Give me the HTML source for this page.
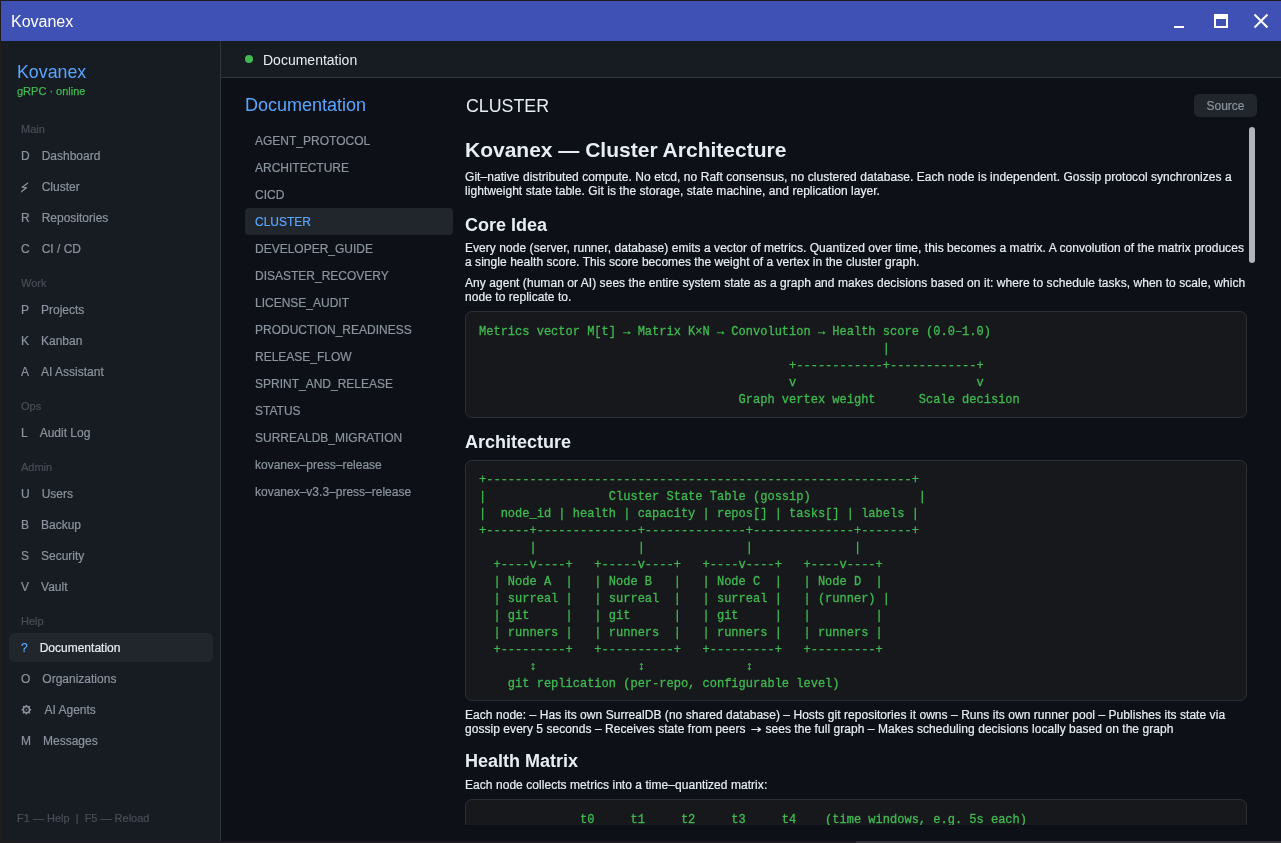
<!DOCTYPE html>
<html><head><meta charset="utf-8">
<style>
*{margin:0;padding:0;box-sizing:border-box}
html,body{width:1281px;height:843px;overflow:hidden;background:#1e1d1b;font-family:"Liberation Sans",sans-serif}
.a{position:absolute;white-space:pre}
#tb{will-change:transform;position:absolute;left:1px;top:1px;width:1280px;height:40px;background:#3f51b5}
#sb{will-change:transform;position:absolute;left:1px;top:41px;width:220px;height:800px;background:#171b22;border-right:1px solid #30363d}
#hd{will-change:transform;position:absolute;left:221px;top:41px;width:1060px;height:37px;background:#171b22;border-bottom:1px solid #30363d}
#mn{will-change:transform;position:absolute;left:221px;top:78px;width:1060px;height:763px;background:#0d1117;overflow:hidden}
.nav{position:absolute;left:8px;width:204px;height:29px;line-height:29px;font-size:12px;color:#8b949e;padding-left:12px;padding-top:1px;display:flex;border-radius:5px}
.nav i{font-style:normal;margin-right:12px}
.nav,.dl,.sec{-webkit-text-stroke:0.2px currentColor}
.nav.act{background:#21262d;color:#e6edf3}
.nav.act i{color:#58a6ff}
.sec{position:absolute;left:20px;font-size:11px;line-height:14px;color:#484f58}
.dl{position:absolute;left:24px;width:208px;height:27px;line-height:27px;font-size:12px;color:#8b949e;padding-left:10px;padding-top:1px;border-radius:4px}
.dl.act{background:#21262d;color:#58a6ff}
.p{position:absolute;left:244px;font-size:12px;line-height:14px;color:#e6edf3;white-space:pre;-webkit-text-stroke:0.2px #e6edf3;letter-spacing:0.05px}
.h{position:absolute;left:244px;font-weight:bold;color:#e6edf3;white-space:pre}
.code{position:absolute;left:244px;width:782px;background:#16181c;border:1px solid #2b3038;border-radius:7px}
.code pre{position:absolute;left:13px;top:12px;font-family:"Liberation Mono",monospace;font-size:12.03px;line-height:17px;color:#3fb950;-webkit-text-stroke:0.3px #3fb950}
</style></head><body>
<div style="position:absolute;left:856px;top:841px;width:425px;height:2px;background:#333331"></div>
<div id="tb">
  <div class="a" style="left:10px;top:7px;font-size:16px;line-height:28px;color:#fff">Kovanex</div>
  <div style="position:absolute;left:1173px;top:24.5px;width:10px;height:2.6px;background:#fff"></div>
  <div style="position:absolute;left:1213px;top:13px;width:14px;height:14px;border:2px solid #fff;border-top-width:5px"></div>
  <svg style="position:absolute;left:1252px;top:12px" width="16" height="16" viewBox="0 0 16 16"><path d="M1.5 1.5L14.5 14.5M14.5 1.5L1.5 14.5" stroke="#fff" stroke-width="2"/></svg>
</div>

<div id="sb">
  <div class="a" style="left:16px;top:20px;font-size:17.8px;line-height:22px;color:#58a6ff">Kovanex</div>
  <div class="a" style="left:16px;top:43px;font-size:11px;line-height:14px;color:#3fb950;-webkit-text-stroke:0.25px #3fb950">gRPC · online</div>

  <div class="sec" style="top:81px">Main</div>
  <div class="nav" style="top:100px"><i>D</i>Dashboard</div>
  <div class="nav" style="top:131px"><i style="width:8.67px;display:inline-block"></i>Cluster<svg style="position:absolute;left:12px;top:10px" width="9" height="12" viewBox="0 0 9 12"><path d="M6.6 1.2L1.1 5.2L5.5 5.8L0.3 9.8" fill="none" stroke="#8b949e" stroke-width="1.25" stroke-linecap="round" stroke-linejoin="round"/></svg></div>
  <div class="nav" style="top:162px"><i>R</i>Repositories</div>
  <div class="nav" style="top:193px"><i>C</i>CI / CD</div>

  <div class="sec" style="top:235px">Work</div>
  <div class="nav" style="top:254px"><i>P</i>Projects</div>
  <div class="nav" style="top:285px"><i>K</i>Kanban</div>
  <div class="nav" style="top:316px"><i>A</i>AI Assistant</div>

  <div class="sec" style="top:358px">Ops</div>
  <div class="nav" style="top:377px"><i>L</i>Audit Log</div>

  <div class="sec" style="top:419px">Admin</div>
  <div class="nav" style="top:438px"><i>U</i>Users</div>
  <div class="nav" style="top:469px"><i>B</i>Backup</div>
  <div class="nav" style="top:500px"><i>S</i>Security</div>
  <div class="nav" style="top:531px"><i>V</i>Vault</div>

  <div class="sec" style="top:573px">Help</div>
  <div class="nav act" style="top:592px"><i>?</i>Documentation</div>
  <div class="nav" style="top:623px"><i>O</i>Organizations</div>
  <div class="nav" style="top:654px"><i style="width:11.5px;display:inline-block"></i>AI Agents<svg style="position:absolute;left:12px;top:9px" width="11" height="11" viewBox="0 0 11 11"><g transform="translate(5.4 5.7)"><circle r="3.1" fill="none" stroke="#8b949e" stroke-width="1.5"/><circle r="0.8" fill="#8b949e"/><g stroke="#8b949e" stroke-width="1.5"><path d="M0 -4.8V-3.4M0 3.4V4.8M-4.8 0H-3.4M3.4 0H4.8M-3.4 -3.4L-2.4 -2.4M2.4 2.4L3.4 3.4M3.4 -3.4L2.4 -2.4M-2.4 2.4L-3.4 3.4"/></g></g></svg></div>
  <div class="nav" style="top:685px"><i>M</i>Messages</div>

  <div class="a" style="left:16px;top:770px;font-size:11px;line-height:14px;color:#484f58;-webkit-text-stroke:0.2px #484f58">F1 — Help  |  F5 — Reload</div>
</div>

<div id="hd">
  <div style="position:absolute;left:24px;top:14px;width:8px;height:8px;border-radius:50%;background:#3fb950"></div>
  <div class="a" style="left:42px;top:10px;font-size:14px;line-height:18px;color:#e6edf3">Documentation</div>
</div>

<div id="mn">
  <div class="a" style="left:24px;top:16px;font-size:18px;line-height:22px;color:#58a6ff">Documentation</div>
  <div class="dl" style="top:49px">AGENT_PROTOCOL</div>
  <div class="dl" style="top:76px">ARCHITECTURE</div>
  <div class="dl" style="top:103px">CICD</div>
  <div class="dl act" style="top:130px">CLUSTER</div>
  <div class="dl" style="top:157px">DEVELOPER_GUIDE</div>
  <div class="dl" style="top:184px">DISASTER_RECOVERY</div>
  <div class="dl" style="top:211px">LICENSE_AUDIT</div>
  <div class="dl" style="top:238px">PRODUCTION_READINESS</div>
  <div class="dl" style="top:265px">RELEASE_FLOW</div>
  <div class="dl" style="top:292px">SPRINT_AND_RELEASE</div>
  <div class="dl" style="top:319px">STATUS</div>
  <div class="dl" style="top:346px">SURREALDB_MIGRATION</div>
  <div class="dl" style="top:373px">kovanex–press–release</div>
  <div class="dl" style="top:400px">kovanex–v3.3–press–release</div>

  <div class="a" style="left:245px;top:17px;font-size:17.8px;line-height:22px;color:#e6edf3">CLUSTER</div>
  <div style="position:absolute;left:973px;top:16px;width:63px;height:23px;border-radius:5px;background:#21262d;color:#8b949e;font-size:12px;line-height:23px;padding-top:1px;text-align:center;-webkit-text-stroke:0.2px #8b949e">Source</div>
  <div style="position:absolute;left:1028px;top:49px;width:6px;height:136px;border-radius:3px;background:#b1b5b9"></div>

  <div class="h" style="top:59px;font-size:21px;line-height:26px">Kovanex — Cluster Architecture</div>
  <div class="p" style="top:92px">Git–native distributed compute. No etcd, no Raft consensus, no clustered database. Each node is independent. Gossip protocol synchronizes a
lightweight state table. Git is the storage, state machine, and replication layer.</div>
  <div class="h" style="top:136px;font-size:18px;line-height:22px">Core Idea</div>
  <div class="p" style="top:163px">Every node (server, runner, database) emits a vector of metrics. Quantized over time, this becomes a matrix. A convolution of the matrix produces
a single health score. This score becomes the weight of a vertex in the cluster graph.</div>
  <div class="p" style="top:198px">Any agent (human or AI) sees the entire system state as a graph and makes decisions based on it: where to schedule tasks, when to scale, which
node to replicate to.</div>
  <div class="code" style="top:233px;height:107px"><pre>Metrics vector M[t] → Matrix K×N → Convolution → Health score (0.0–1.0)
                                                        |
                                           +------------+------------+
                                           v                         v
                                    Graph vertex weight      Scale decision</pre></div>
  <div class="h" style="top:353px;font-size:18px;line-height:22px">Architecture</div>
  <div class="code" style="top:382px;height:241px"><pre style="top:11px">+-----------------------------------------------------------+
|                 Cluster State Table (gossip)               |
|  node_id | health | capacity | repos[] | tasks[] | labels |
+------+--------------+--------------+--------------+-------+
       |              |              |              |
  +----v----+   +-----v----+   +----v----+   +----v----+
  | Node A  |   | Node B   |   | Node C  |   | Node D  |
  | surreal |   | surreal  |   | surreal |   | (runner) |
  | git     |   | git      |   | git     |   |         |
  | runners |   | runners  |   | runners |   | runners |
  +---------+   +----------+   +---------+   +---------+
       ↕              ↕              ↕
    git replication (per-repo, configurable level)</pre></div>
  <div class="p" style="top:630px">Each node: – Has its own SurrealDB (no shared database) – Hosts git repositories it owns – Runs its own runner pool – Publishes its state via
gossip every 5 seconds – Receives state from peers <svg width="13" height="8" viewBox="0 0 13 8" style="vertical-align:0"><path d="M2.3 4.5H11.5M8.6 2.2L11.6 4.5L8.6 6.8" fill="none" stroke="#e6edf3" stroke-width="1.2"/></svg> sees the full graph – Makes scheduling decisions locally based on the graph</div>
  <div class="h" style="top:672px;font-size:18px;line-height:22px">Health Matrix</div>
  <div class="p" style="top:700px">Each node collects metrics into a time–quantized matrix:</div>
  <div style="position:absolute;left:0;top:0;width:1060px;height:747px;overflow:hidden;pointer-events:none">
    <div class="code" style="top:721px;height:120px"><pre>              t0     t1     t2     t3     t4    (time windows, e.g. 5s each)</pre></div>
  </div>
</div>
</body></html>
